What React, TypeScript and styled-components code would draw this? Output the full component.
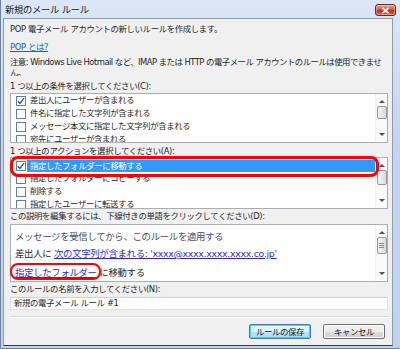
import React from "react";
import styled, { createGlobalStyle } from "styled-components";

const FONT = `"DejaVu Sans", "Noto Sans CJK JP", sans-serif`;

const Global = createGlobalStyle`
  html, body { margin: 0; padding: 0; background: #c9dbef; }
  body { font-family: ${FONT}; }
  * { box-sizing: border-box; }
`;

const Window = styled.div`
  width: 400px;
  height: 349px;
  display: flex;
  flex-direction: column;
  background: linear-gradient(180deg, #dbe7f4 0%, #c3d6ec 40%, #bfd3ea 100%);
  border-left: 1px solid #6f8299;
  border-bottom: 1px solid #6f8299;
  overflow: hidden;
`;

const TitleBar = styled.div`
  height: 18px;
  display: flex;
  align-items: center;
  padding: 0 4px 0 4px;
  flex: none;
`;

const Title = styled.div`
  flex: 1;
  font-family: ${FONT};
  font-size: 9.3px;
  letter-spacing: -0.3px;
  color: #1a1a1a;
  line-height: 12px;
  padding-top: 1px;
`;

const CloseBtn = styled.div`
  width: 21px;
  height: 12px;
  margin-top: 2px;
  border: 1px solid #6b2a22;
  border-radius: 3px;
  background: linear-gradient(180deg, #e8a395 0%, #d45a45 45%, #c0301c 55%, #d86a4c 100%);
  display: flex;
  align-items: center;
  justify-content: center;
  box-shadow: inset 0 0 0 1px rgba(255, 255, 255, 0.35);
`;

const Body = styled.div`
  flex: 1;
  margin: 0 7px 2px 2px;
  background: #f0f0f0;
  border: 1px solid #8d9db0;
  border-bottom-color: #2f3a46;
  padding: 4px 3px 0 6px;
  display: flex;
  flex-direction: column;
  font-family: ${FONT};
  font-size: 8.4px;
  letter-spacing: -0.35px;
  color: #1e1e1e;
`;

const Line = styled.div<{ $mt?: number }>`
  line-height: 12px;
  height: 12px;
  margin-top: ${(p) => p.$mt ?? 0}px;
  white-space: nowrap;
`;

const Link = styled.a`
  color: #0066cc;
  text-decoration: underline;
  cursor: pointer;
`;

const Note = styled.div`
  margin-top: 4px;
  width: 375px;
  line-height: 11px;
  height: 19px;
  overflow: hidden;
  letter-spacing: -0.5px;
`;

const ListBox = styled.div<{ $h: number; $mt: number }>`
  position: relative;
  width: 378px;
  height: ${(p) => p.$h}px;
  margin-top: ${(p) => p.$mt}px;
  background: #fff;
  border: 1px solid #a9aeb5;
  display: flex;
  overflow: hidden;
`;

const Items = styled.div<{ $pt: number }>`
  flex: 1;
  padding-top: ${(p) => p.$pt}px;
  overflow: hidden;
`;

const Item = styled.div`
  height: 13px;
  display: flex;
  align-items: center;
  padding-left: 5px;
  white-space: nowrap;
`;

const Check = styled.span<{ $on?: boolean }>`
  flex: none;
  width: 10px;
  height: 10px;
  border: 1px solid #5b7fa6;
  background: #fff;
  margin-right: 1px;
  display: flex;
  align-items: center;
  justify-content: center;
`;

const ItemText = styled.span<{ $sel?: boolean }>`
  flex: 1;
  height: 13px;
  line-height: 13px;
  padding-left: 3px;
  background: ${(p) => (p.$sel ? "#3399ff" : "transparent")};
  color: ${(p) => (p.$sel ? "#fff" : "#1e1e1e")};
  border-top: ${(p) => (p.$sel ? "1px solid #a8d2ff" : "none")};
`;

const ScrollBar = styled.div`
  flex: none;
  width: 12px;
  height: 100%;
  background: #fafafa;
  border-left: 1px solid #f0f0f0;
  display: flex;
  flex-direction: column;
  align-items: center;
  padding: 6px 0 6px;
`;

const Arrow = styled.div<{ $down?: boolean }>`
  width: 0;
  height: 0;
  border-left: 3px solid transparent;
  border-right: 3px solid transparent;
  ${(p) => (p.$down ? "border-top: 3px solid #505050;" : "border-bottom: 3px solid #505050;")}
  flex: none;
`;

const Thumb = styled.div<{ $h: number; $mt: number }>`
  width: 10px;
  height: ${(p) => p.$h}px;
  margin-top: ${(p) => p.$mt}px;
  border: 1px solid #979797;
  border-radius: 2px;
  background: linear-gradient(90deg, #f4f4f4 0%, #e8e8e8 50%, #d9d9d9 100%);
  display: flex;
  flex-direction: column;
  align-items: center;
  justify-content: center;
  gap: 1px;
  flex: none;
`;

const Grip = styled.span`
  width: 5px;
  height: 1px;
  background: #8a8a8a;
`;

const Spacer = styled.div`
  flex: 1;
`;

const Highlight = styled.div<{ $l: number; $t: number; $w: number; $h: number; $b: number }>`
  position: absolute;
  left: ${(p) => p.$l}px;
  top: ${(p) => p.$t}px;
  width: ${(p) => p.$w}px;
  height: ${(p) => p.$h}px;
  border: ${(p) => p.$b}px solid #ff0000;
  border-radius: 8px;
  pointer-events: none;
`;

const DescBody = styled.div`
  flex: 1;
  padding: 5px 0 0 4px;
  display: flex;
  flex-direction: column;
  font-size: 9.4px;
  letter-spacing: -0.3px;
`;

const DescLine = styled.div<{ $mt: number; $muted?: boolean }>`
  line-height: 13px;
  height: 13px;
  margin-top: ${(p) => p.$mt}px;
  white-space: nowrap;
  color: ${(p) => (p.$muted ? "#4a4a5a" : "#1e1e1e")};
`;

const RuleLink = styled.a`
  color: #2b2bd6;
  text-decoration: underline;
`;

const Input = styled.div`
  width: 378px;
  height: 13px;
  margin-top: 2px;
  background: #fff;
  border: 1px solid #e3e3e3;
  border-top-color: #d0d0d0;
  line-height: 11px;
  padding-left: 3px;
  white-space: nowrap;
`;

const Separator = styled.div`
  width: 378px;
  height: 2px;
  margin-top: 6px;
  border-top: 1px solid #d5d5d5;
  border-bottom: 1px solid #ffffff;
`;

const ButtonRow = styled.div`
  display: flex;
  justify-content: flex-end;
  gap: 12px;
  margin-top: 6px;
  padding-right: 4px;
`;

const Button = styled.div<{ $default?: boolean }>`
  width: 62px;
  height: 15px;
  border: 1px solid ${(p) => (p.$default ? "#3c7fb1" : "#707070")};
  border-radius: 2px;
  background: ${(p) =>
    p.$default
      ? "linear-gradient(180deg, #eaf6fd 0%, #d9f0fc 50%, #bee6fd 51%, #a7d9f5 100%)"
      : "linear-gradient(180deg, #f2f2f2 0%, #ebebeb 50%, #dddddd 51%, #cfcfcf 100%)"};
  box-shadow: inset 0 0 0 1px ${(p) => (p.$default ? "#48d4f8" : "#fcfcfc")};
  display: flex;
  align-items: center;
  justify-content: center;
  line-height: 12px;
  color: #111;
`;

const CheckMark = () => (
  <svg width="8" height="8" viewBox="0 0 8 8">
    <path d="M1 4.2 L3 6.5 L7 1.2" fill="none" stroke="#2b5797" strokeWidth="1.4" />
  </svg>
);

type Row = { text: string; on?: boolean; sel?: boolean };

const conditions: Row[] = [
  { text: "差出人にユーザーが含まれる", on: true },
  { text: "件名に指定した文字列が含まれる" },
  { text: "メッセージ本文に指定した文字列が含まれる" },
  { text: "宛先にユーザーが含まれる" },
];

const actions: Row[] = [
  { text: "指定したフォルダーに移動する", on: true, sel: true },
  { text: "指定したフォルダーにコピーする" },
  { text: "削除する" },
  { text: "指定したユーザーに転送する" },
];

const List = ({ rows, pt }: { rows: Row[]; pt: number }) => (
  <Items $pt={pt}>
    {rows.map((r) => (
      <Item key={r.text}>
        <Check $on={r.on}>{r.on && <CheckMark />}</Check>
        <ItemText $sel={r.sel}>{r.text}</ItemText>
      </Item>
    ))}
  </Items>
);

const Scroll = ({ thumbH, thumbMt, grip }: { thumbH: number; thumbMt: number; grip?: boolean }) => (
  <ScrollBar>
    <Arrow />
    <Thumb $h={thumbH} $mt={thumbMt}>
      {grip && (
        <>
          <Grip />
          <Grip />
          <Grip />
        </>
      )}
    </Thumb>
    <Spacer />
    <Arrow $down />
  </ScrollBar>
);

export default function App() {
  return (
    <>
      <Global />
      <Window>
        <TitleBar>
          <Title>新規のメール ルール</Title>
          <CloseBtn>
            <svg width="9" height="7" viewBox="0 0 9 7">
              <path d="M1.5 0.8 L7.5 6.2 M7.5 0.8 L1.5 6.2" stroke="#fff" strokeWidth="1.8" />
            </svg>
          </CloseBtn>
        </TitleBar>
        <Body>
          <Line>POP 電子メール アカウントの新しいルールを作成します。</Line>
          <Line $mt={6}>
            <Link>POP とは?</Link>
          </Line>
          <Note>
            注意: Windows Live Hotmail など、IMAP または HTTP の電子メール アカウントのルールは使用できません。
          </Note>
          <Line $mt={4}>1 つ以上の条件を選択してください(C):</Line>
          <ListBox $h={50} $mt={1}>
            <List rows={conditions} pt={0} />
            <Scroll thumbH={13} thumbMt={3} />
          </ListBox>
          <Line $mt={2}>1 つ以上のアクションを選択してください(A):</Line>
          <ListBox $h={52} $mt={0}>
            <List rows={actions} pt={1} />
            <Scroll thumbH={15} thumbMt={3} />
          </ListBox>
          <Line $mt={1}>この説明を編集するには、下線付きの単語をクリックしてください(D):</Line>
          <ListBox $h={58} $mt={2}>
            <DescBody>
              <DescLine $mt={0} $muted>
                メッセージを受信してから、このルールを適用する
              </DescLine>
              <DescLine $mt={4}>
                差出人に <RuleLink>次の文字列が含まれる: 'xxxx@xxxx.xxxx.xxxx.co.jp'</RuleLink>
              </DescLine>
              <DescLine $mt={6}>
                <RuleLink>指定したフォルダー</RuleLink> に移動する
              </DescLine>
            </DescBody>
            <Scroll thumbH={17} thumbMt={3} grip />
          </ListBox>
          <Line $mt={1}>このルールの名前を入力してください(N):</Line>
          <Input>新規の電子メール ルール #1</Input>
          <Separator />
          <ButtonRow>
            <Button $default>ルールの保存</Button>
            <Button>キャンセル</Button>
          </ButtonRow>
        </Body>
      </Window>
      <Highlight $l={10} $t={156} $w={369} $h={21} $b={3} />
      <Highlight $l={10} $t={263} $w={91} $h={17} $b={2} />
    </>
  );
}
